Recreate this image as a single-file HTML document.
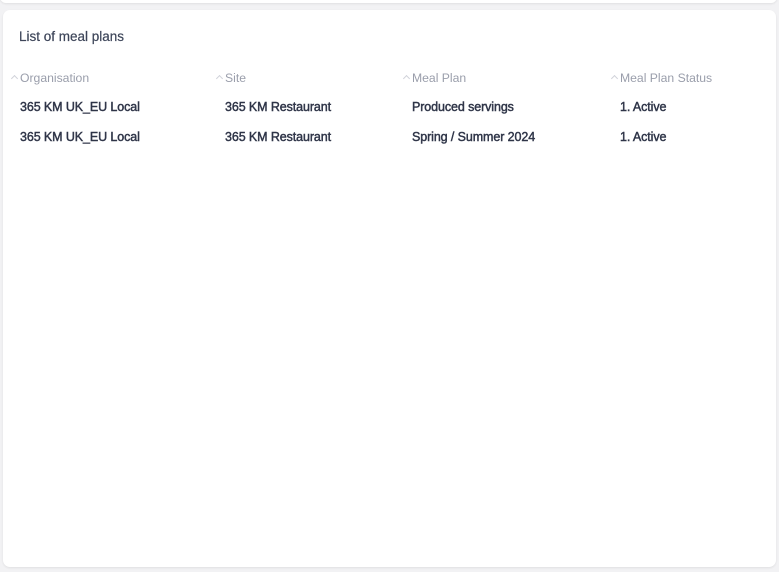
<!DOCTYPE html>
<html><head><style>
body{margin:0;width:779px;height:572px;background:#f2f2f4;font-family:"Liberation Sans",sans-serif;overflow:hidden;position:relative}
.top{position:absolute;left:0;top:-10px;width:777px;height:13px;background:#fff;border-radius:6px;box-shadow:0 1px 2px rgba(0,0,0,.08)}
.card{position:absolute;left:3px;top:10px;width:773px;height:557px;background:#fff;border-radius:7px;box-shadow:0 1px 2px rgba(0,0,0,.08)}
.t{position:absolute;white-space:nowrap}
h1{position:absolute;left:16px;top:19px;margin:0;font-size:13.5px;font-weight:normal;color:#3d4559;-webkit-text-stroke:0.2px #3d4559}
.h{font-size:12.2px;color:#9a9eab;top:61px}
.h:before{content:"";position:absolute;left:-8px;top:5px;width:4px;height:4px;border-left:1px solid #d0d2d9;border-top:1px solid #d0d2d9;transform:rotate(45deg)}
.c{font-size:12.5px;color:#2f3548;-webkit-text-stroke:0.45px #2f3548;letter-spacing:-0.1px}
</style></head><body>
<div class="top"></div>
<div class="card">
<h1>List of meal plans</h1>
<div class="t h" style="left:17px">Organisation</div>
<div class="t h" style="left:222px">Site</div>
<div class="t h" style="left:409px">Meal Plan</div>
<div class="t h" style="left:617px">Meal Plan Status</div>
<div class="t c" style="left:17px;top:90px">365 KM UK_EU Local</div>
<div class="t c" style="left:222px;top:90px">365 KM Restaurant</div>
<div class="t c" style="left:409px;top:90px">Produced servings</div>
<div class="t c" style="left:617px;top:90px">1. Active</div>
<div class="t c" style="left:17px;top:120px">365 KM UK_EU Local</div>
<div class="t c" style="left:222px;top:120px">365 KM Restaurant</div>
<div class="t c" style="left:409px;top:120px">Spring / Summer 2024</div>
<div class="t c" style="left:617px;top:120px">1. Active</div>
</div>
</body></html>
